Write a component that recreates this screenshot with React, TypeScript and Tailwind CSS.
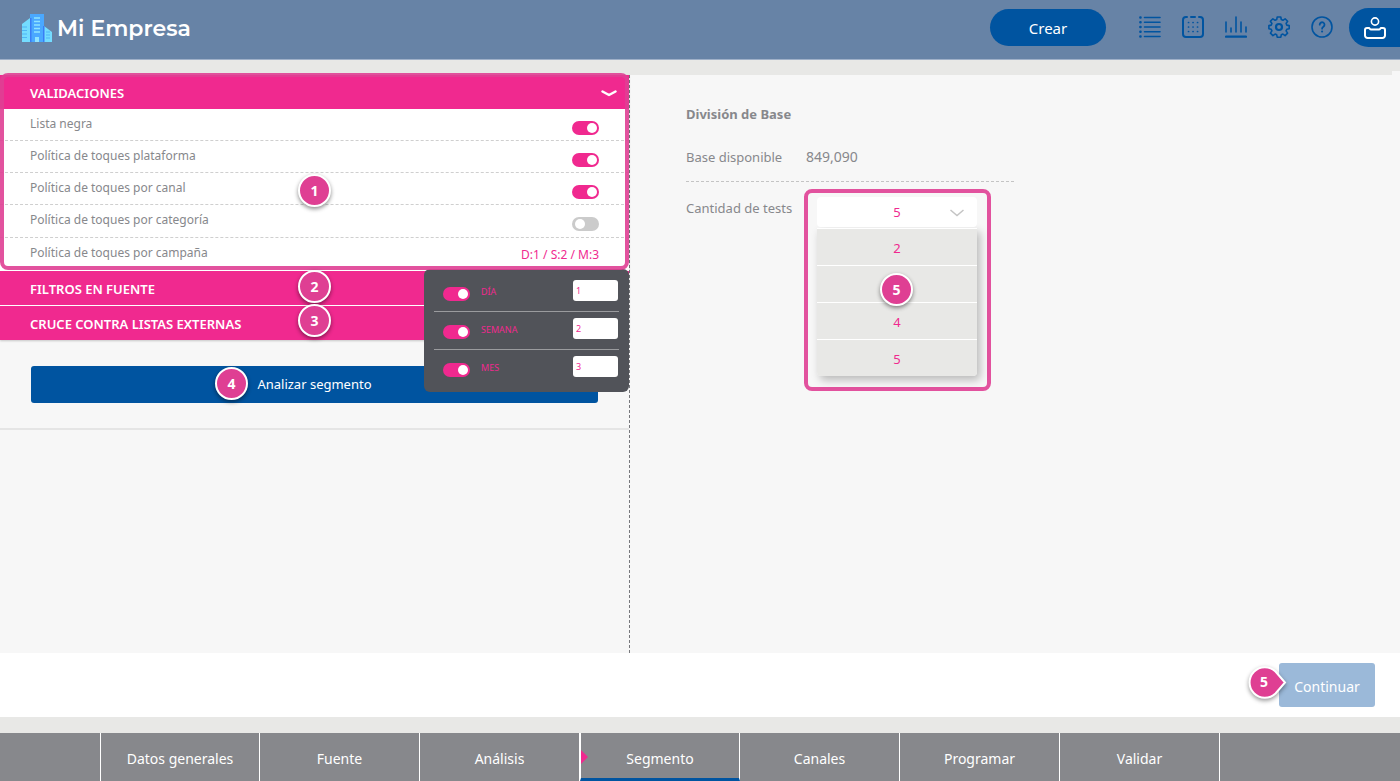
import React from "react";

const PINK = "text-[#f0298f]";

function Switch({ label, on }: { label: string; on?: boolean }) {
  return (
    <input
      type="checkbox"
      role="switch"
      aria-label={label}
      defaultChecked={on}
      className="relative h-[14px] w-[27px] shrink-0 appearance-none rounded-full bg-[#cbcbcb] before:absolute before:left-[3px] before:top-[2px] before:size-[10px] before:rounded-full before:bg-white checked:bg-[#f0298f] checked:before:left-[15px]"
    />
  );
}

function Badge({ n, className }: { n: string; className: string }) {
  return (
    <span
      className={
        "absolute z-20 flex size-[33px] items-center justify-center rounded-full border-2 border-white bg-[#df3f93] text-sm font-bold text-white shadow-[0_2px_4px_rgba(0,0,0,0.45)] " +
        className
      }
    >
      {n}
    </span>
  );
}

function Logo() {
  return (
    <svg width="30" height="28" viewBox="0 0 30 28" aria-hidden="true">
      <path d="M0 10 8 4v24H0z" fill="#74dcff" />
      <path d="M22 12l8 6v10h-8z" fill="#74dcff" />
      <path d="M8 0h14v28H8z" fill="#4aa8ff" />
      <path d="M8 4h1.500v24H8zM21 12h1.500v16H21z" fill="#3a7df5" />
      <path d="M12 4h6M12 7.500h6M12 11h6M12 14.500h6M12 18h6" stroke="#8fe3ff" strokeWidth="1.300" />
      <path d="M0 13h5M0 16.500h5M0 20h5M0 23.500h5M24 18h4M24 21h4M24 24h4" stroke="#4fb4f5" strokeWidth="1" />
      <path d="M13 23h4v5h-4z" fill="#8fe3ff" />
    </svg>
  );
}

const stroke = { fill: "none", stroke: "#0054a0", strokeWidth: 1.6, strokeLinecap: "round" as const, strokeLinejoin: "round" as const };

function ListIcon() {
  return (
    <svg width="22" height="22" viewBox="0 0 22 22" {...stroke}>
      <path d="M5.500 1.500H21M5.500 6.300H21M5.500 11H21M5.500 15.800H21M5.500 20.500H21" />
      <path d="M1.300 1.500h.3M1.300 6.300h.3M1.300 11h.3M1.300 15.800h.3M1.300 20.500h.3" strokeWidth="2.400" />
    </svg>
  );
}

function CalendarIcon() {
  return (
    <svg width="22" height="22" viewBox="0 0 22 22" {...stroke}>
      <path d="M5 1H4a3 3 0 0 0-3 3v14a3 3 0 0 0 3 3h14a3 3 0 0 0 3-3V4a3 3 0 0 0-3-3h-1M9 1h4" strokeWidth="2" />
      <path d="M6.500 6.500h.1M11 6.500h.1M15.500 6.500h.1M6.500 11h.1M11 11h.1M15.500 11h.1M6.500 15.500h.1M11 15.500h.1M15.500 15.500h.1" strokeWidth="1.700" />
    </svg>
  );
}

function ChartIcon() {
  return (
    <svg width="22" height="22" viewBox="0 0 22 22" {...stroke}>
      <path d="M1 6v10M6 12v4M11 1v15M16 6v10M21 11v5" />
      <path d="M1 20.700h20" strokeWidth="2.200" />
    </svg>
  );
}

function GearIcon() {
  return (
    <svg width="22" height="22" viewBox="0 0 22 22" {...stroke}>
      <path
        d="M9.200 1h3.600l.5 2.600 1.600.7 2.200-1.500 2.500 2.500-1.500 2.200.7 1.600 2.400.5v3.200l-2.400.5-.7 1.600 1.500 2.200-2.500 2.500-2.200-1.500-1.600.7-.5 2.400H9.200l-.5-2.400-1.600-.7-2.200 1.500-2.500-2.500 1.500-2.200-.7-1.600L.9 12.800V9.600l2.300-.5.7-1.600-1.500-2.200 2.500-2.500 2.200 1.500 1.600-.7z"
        strokeWidth="1.600"
      />
      <circle cx="11" cy="11" r="3" strokeWidth="2.200" />
    </svg>
  );
}

function HelpIcon() {
  return (
    <svg width="22" height="22" viewBox="0 0 22 22" {...stroke}>
      <circle cx="11" cy="11" r="10" />
      <path d="M8.700 8.700a2.400 2.400 0 1 1 3.700 2c-.9.600-1.300 1-1.300 2" strokeWidth="1.800" />
      <path d="M11 15.600h.1" strokeWidth="2" />
    </svg>
  );
}

function UserIcon() {
  return (
    <svg width="22" height="22" viewBox="0 0 22 22" fill="none" stroke="#fff" strokeWidth="2" strokeLinejoin="round" strokeLinecap="round">
      <circle cx="11" cy="4.500" r="3.600" strokeWidth="1.600" />
      <path d="M5 11H3A2 2 0 0 0 1 13v5.500A2.500 2.500 0 0 0 3.500 21h15a2.500 2.500 0 0 0 2.500-2.500V13a2 2 0 0 0-2-2h-2c-.8 0-.8 1.600-2 1.600H7c-1.200 0-1.200-1.600-2-1.600z" />
    </svg>
  );
}

const icons = [
  { name: "Lista", el: <ListIcon /> },
  { name: "Calendario", el: <CalendarIcon /> },
  { name: "Reportes", el: <ChartIcon /> },
  { name: "Configuración", el: <GearIcon /> },
  { name: "Ayuda", el: <HelpIcon /> },
];

const rules = [
  { label: "Lista negra", on: true },
  { label: "Política de toques plataforma", on: true },
  { label: "Política de toques por canal", on: true },
  { label: "Política de toques por categoría", on: false },
];

const limits = [
  { label: "DÍA", value: "1" },
  { label: "SEMANA", value: "2" },
  { label: "MES", value: "3" },
];

const steps = ["Datos generales", "Fuente", "Análisis", "Segmento", "Canales", "Programar", "Validar"];

export default function App() {
  return (
    <div className="flex min-h-screen flex-col bg-[#e8e8e6] font-['Noto_Sans',sans-serif] text-[#87888c]">
      <header className="flex h-[60px] items-start justify-between border-b border-[#9fb0c8] bg-[#6783a6]">
        <a href="#" className="flex items-start gap-[5px] pl-[22px] pt-[14px] font-['Montserrat','Inter',sans-serif] text-[22px] font-semibold leading-[30px] text-white">
          <Logo />
          Mi Empresa
        </a>
        <div className="flex items-start pt-2">
          <button className="mt-px h-[37px] w-[116px] rounded-full bg-[#0054a0] pt-[2px] text-[15px] text-white">Crear</button>
          <nav className="ml-[33px] mr-4 flex gap-[21px] pt-2">
            {icons.map((i) => (
              <a key={i.name} href="#" aria-label={i.name}>
                {i.el}
              </a>
            ))}
          </nav>
          <button aria-label="Usuario" className="flex h-[39px] w-[51px] items-center rounded-l-full bg-[#0054a0] pl-[15px]">
            <UserIcon />
          </button>
        </div>
      </header>

      <main className="relative mt-[15px] flex flex-1 bg-[#f7f7f7]">
        <span className="absolute -top-1 right-0 h-1 w-2 bg-[#f7f7f7]" />
        <section className="relative w-[45%] border-r border-dashed border-[#77787c]">
          <div className="pointer-events-none absolute -top-[2px] left-0 z-10 h-[197px] w-full rounded-lg border-4 border-[#df3f93]/90" />
          <div className="flex flex-col gap-px bg-white shadow-[0_1px_2px_rgba(0,0,0,0.2)]">
            <div>
              <button className="flex h-[34px] w-full items-center justify-between bg-[#f0298f] pl-[30px] pr-3 pt-[3px] text-[13px] font-semibold text-white">
                VALIDACIONES
                <svg width="16" height="8" viewBox="0 0 16 8" fill="none" stroke="#fff" strokeWidth="2.500" strokeLinecap="round" strokeLinejoin="round">
                  <path d="M1.500 1.500 8 5 14.500 1.500" />
                </svg>
              </button>
              {rules.map((r) => (
                <label
                  key={r.label}
                  className="flex h-8 items-start justify-between border-b border-dashed border-[#cfcfcf] px-[30px] text-xs leading-[30px] nth-last-2:h-[33px]"
                >
                  {r.label}
                  <span className="flex pt-3">
                    <Switch label={r.label} on={r.on} />
                  </span>
                </label>
              ))}
              <div className="flex h-8 items-start justify-between px-[30px] text-xs leading-[30px]">
                <span>Política de toques por campaña</span>
                <span className={"pt-[2px] " + PINK}>D:1 / S:2 / M:3</span>
              </div>
            </div>
            <button className="h-[34px] bg-[#f0298f] pl-[30px] pt-[3px] text-left text-[13px] font-semibold text-white">FILTROS EN FUENTE</button>
            <button className="h-[34px] bg-[#f0298f] pl-[30px] pt-[3px] text-left text-[13px] font-semibold text-white">CRUCE CONTRA LISTAS EXTERNAS</button>
          </div>
          <div className="border-b-2 border-[#e5e5e5] px-[31px] pb-[25px] pt-[26px]">
            <button className="h-[37px] w-full rounded-[3px] bg-[#0054a0] text-[13px] text-white">Analizar segmento</button>
          </div>

          <div className="absolute right-0 top-[194px] w-[205px] rounded-md bg-[#515359] px-[10px] pb-1 pt-[5px]">
            {limits.map((l) => (
              <div key={l.label} className="flex h-[38px] items-start border-b border-[#9a9b9e] pl-[9px] pr-px last:border-transparent">
                <span className="flex pt-[13px]">
                  <Switch label={"Activar " + l.label} on />
                </span>
                <label htmlFor={l.label} className={"ml-[11px] flex-1 text-[9px] leading-[35px] " + PINK}>
                  {l.label}
                </label>
                <input id={l.label} defaultValue={l.value} className={"mt-[6px] h-[21px] w-[45px] rounded-[3px] bg-white px-[3px] text-[9px] " + PINK} />
              </div>
            ))}
          </div>

          <Badge n="1" className="left-[298px] top-[99px]" />
          <Badge n="2" className="left-[298px] top-[195px]" />
          <Badge n="3" className="left-[298px] top-[229px]" />
          <Badge n="4" className="left-[215px] top-[292px]" />
        </section>

        <section className="flex-1 pl-14 pt-[27px]">
          <h2 className="text-[13px] font-bold leading-6">División de Base</h2>
          <div className="mt-[19px] flex h-[37px] w-[328px] border-b border-dashed border-[#c4c4c4] text-[13px] leading-6">
            <span className="w-[120px]">Base disponible</span>
            <span className="text-sm leading-6">849,090</span>
          </div>
          <div className="flex pt-[7px] text-[13px]">
            <label htmlFor="tests" className="w-[118px] pt-[7px] leading-6">
              Cantidad de tests
            </label>
            <div className="relative w-[187px] rounded-lg border-4 border-[#df3f93]/90 pb-[11px] pl-[9px] pr-[10px] pt-1">
              <select
                id="tests"
                defaultValue="5"
                className={"h-[30px] w-full appearance-none rounded bg-white pt-[2px] text-center text-[13px] [text-align-last:center] " + PINK}
              >
                {["2", "3", "4", "5"].map((v) => (
                  <option key={v}>{v}</option>
                ))}
              </select>
              <svg className="pointer-events-none absolute right-[23px] top-4" width="14" height="8" viewBox="0 0 14 8" fill="none" stroke="#c4c4c4" strokeWidth="1.500">
                <path d="M.5 1 7 6.500 13.500 1" />
              </svg>
              <ul className="mt-px rounded-b shadow-[3px_4px_8px_rgba(0,0,0,0.25)]">
                {["2", "", "4", "5"].map((v, i) => (
                  <li key={i} className={"h-[37px] border-t border-white bg-[#e8e8e6] text-center leading-[38px] last:rounded-b " + PINK}>
                    {v}
                  </li>
                ))}
              </ul>
              <Badge n="5" className="left-[72px] top-[80px]" />
            </div>
          </div>
        </section>
      </main>

      <div className="flex h-16 items-start justify-end bg-white pr-[25px] pt-[10px]">
        <div className="relative">
          <button className="h-[44px] w-24 rounded-[3px] bg-[#9bb9d9] pt-[3px] text-sm text-white">Continuar</button>
          <span className="absolute -left-[31px] top-[3px] flex size-8 items-center justify-center text-sm font-bold text-white">
            <svg className="absolute left-0 top-0 overflow-visible drop-shadow-[0_2px_2px_rgba(0,0,0,0.4)]" width="38" height="33" viewBox="0 0 38 33">
              <path d="M27.500 5.500 37 16.500l-9.500 11A15.300 15.300 0 1 1 27.500 5.500z" fill="#df3f93" stroke="#fff" strokeWidth="2" />
            </svg>
            <span className="relative">5</span>
          </span>
        </div>
      </div>

      <nav className="mt-4 flex h-12 bg-[#87888c] pl-[100px] text-sm text-white">
        {steps.map((s) => (
          <a
            key={s}
            href="#"
            aria-current={s === "Segmento" ? "step" : undefined}
            className="relative flex w-40 items-start justify-center border-r border-white leading-[51px] first:border-l aria-[current=step]:border-b-[3px] aria-[current=step]:border-l aria-[current=step]:border-b-[#0054a0]"
          >
            {s === "Segmento" && (
              <svg className="absolute left-0 top-[17px]" width="7" height="14" viewBox="0 0 7 14">
                <path d="M0 0 7 7 0 14z" fill="#f0298f" />
              </svg>
            )}
            {s}
          </a>
        ))}
      </nav>
    </div>
  );
}
